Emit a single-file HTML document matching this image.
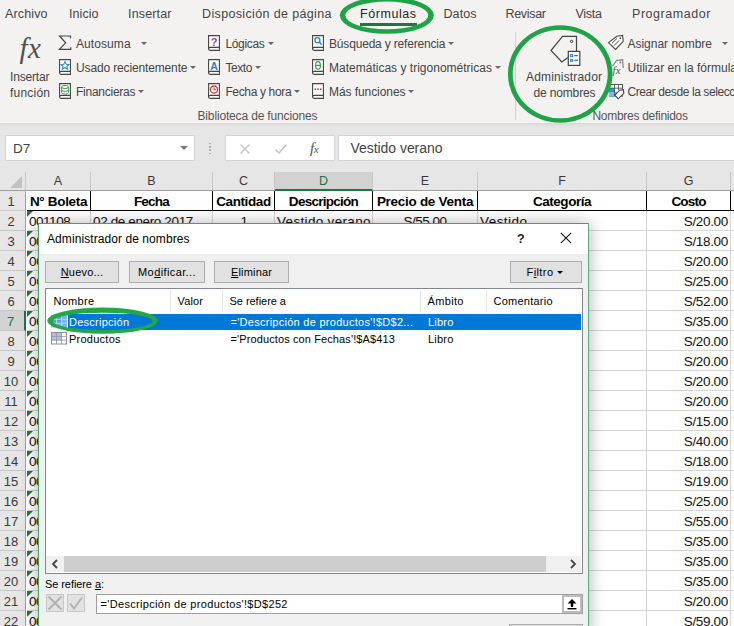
<!DOCTYPE html>
<html lang="es">
<head>
<meta charset="utf-8">
<title>Administrador de nombres</title>
<style>
html,body{margin:0;padding:0;}
body{width:734px;height:626px;overflow:hidden;position:relative;background:#e6e6e6;font-family:"Liberation Sans",sans-serif;color:#444;}
.abs{position:absolute;white-space:nowrap;}
#ribbon{position:absolute;left:0;top:0;width:734px;height:123px;background:#f3f2f1;border-bottom:1px solid #d8d8d8;}
#rshadow{position:absolute;left:0;top:124px;width:734px;height:4px;background:linear-gradient(#dcdcdc,#e6e6e6);}
.tab{position:absolute;top:6px;font-size:12.5px;color:#444;white-space:nowrap;line-height:16px;}
.cmd{position:absolute;font-size:12px;color:#444;white-space:nowrap;line-height:16px;}
.grp{position:absolute;font-size:12px;color:#555;white-space:nowrap;top:108px;line-height:16px;}
.dd{position:absolute;top:6px;width:0;height:0;border-left:3px solid transparent;border-right:3px solid transparent;border-top:3px solid #666;}
.dd2{display:inline-block;width:0;height:0;border-left:3px solid transparent;border-right:3px solid transparent;border-top:3px solid #000;vertical-align:middle;margin-left:4px;}
/* formula bar */
#namebox{position:absolute;left:5px;top:135px;width:188px;height:24px;background:#fff;border:1px solid #d4d4d4;}
#fxbox{position:absolute;left:225px;top:135px;width:108px;height:24px;background:#fff;border:1px solid #d4d4d4;}
#fbox{position:absolute;left:338px;top:135px;width:400px;height:24px;background:#fff;border:1px solid #d4d4d4;}
/* grid */
#grid{position:absolute;left:0;top:172px;width:734px;height:454px;background:#fff;overflow:hidden;font-family:"Liberation Sans",sans-serif;}
.ch{position:absolute;top:0;height:19px;background:#e6e6e6;border-right:1px solid #c6c6c6;border-bottom:1px solid #9f9f9f;font-size:12.5px;color:#3a3a3a;text-align:center;line-height:19px;box-sizing:border-box;}
.ch.sel{background:#d2d2d2;color:#217346;border-bottom:2px solid #217346;}
.rh{position:absolute;left:0;width:26px;height:20px;background:#e6e6e6;border-bottom:1px solid #c6c6c6;border-right:1px solid #9f9f9f;font-size:13px;color:#3a3a3a;text-align:center;line-height:21px;box-sizing:border-box;padding-right:3px;}
.rh.sel{background:#d2d2d2;color:#217346;border-right:2px solid #217346;}
.cell{position:absolute;height:20px;line-height:20px;font-size:13.5px;color:#111;white-space:nowrap;overflow:hidden;box-sizing:border-box;border-right:1px solid #d4d4d4;border-bottom:1px solid #d4d4d4;padding:1px 2px 0 2px;}
.cell.hd{font-weight:bold;text-align:center;border-right:1px solid #000;border-bottom:1px solid #000;color:#000;font-size:13.5px;padding-top:1px;}
.tri{position:absolute;left:0;top:0;width:0;height:0;border-right:6px solid transparent;border-top:6px solid #1e7b3c;}
/* dialog */
#dlg{position:absolute;left:38px;top:223px;width:549px;height:410px;background:#f0f0f0;border:1px solid #5aab7c;border-top-color:#469f69;border-left-color:#469f69;box-shadow:0 1px 16px rgba(0,0,0,.32);font-size:12px;color:#000;}
#dlgin{position:absolute;left:3px;top:1px;width:546px;height:409px;}
#dlgtitle{position:absolute;left:-3px;top:-1px;width:549px;height:30px;background:#fff;}
.btn{position:absolute;height:22px;border:1px solid #adadad;background:#e1e1e1;box-sizing:border-box;text-align:center;line-height:20px;font-size:11px;color:#000;}
#list{position:absolute;left:3px;top:63px;width:538px;height:286px;background:#fff;border:1px solid #828790;box-sizing:border-box;}
.lh{position:absolute;top:1px;height:22px;line-height:22px;border-right:1px solid #e5e5e5;box-sizing:border-box;padding-left:6.5px;font-size:11px;}
.lr{position:absolute;left:1px;width:535px;height:16px;line-height:16px;font-size:11px;}
.lr span{position:absolute;top:0;}
.ti{position:absolute;}
</style>
</head>
<body>
<div id="ribbon">
  <div class="tab" style="left:5px;"><span class="fit" style="letter-spacing:0.135px;--w:42.5px">Archivo</span></div>
  <div class="tab" style="left:69px;"><span class="fit" style="letter-spacing:0.062px;--w:29.5px">Inicio</span></div>
  <div class="tab" style="left:128px;"><span class="fit" style="letter-spacing:0.158px;--w:43.5px">Insertar</span></div>
  <div class="tab" style="left:202px;"><span class="fit" style="letter-spacing:0.359px;--w:129.5px">Disposición de página</span></div>
  <div class="tab" style="left:360px;color:#262626"><span class="fit" style="letter-spacing:0.558px;--w:56px">Fórmulas</span></div>
  <div class="abs" style="left:360px;top:23px;width:57px;height:3px;background:#217346"></div>
  <div class="tab" style="left:443.5px;"><span class="fit" style="letter-spacing:0.086px;--w:33px">Datos</span></div>
  <div class="tab" style="left:505.5px;"><span class="fit" style="letter-spacing:-0.312px;--w:40.5px">Revisar</span></div>
  <div class="tab" style="left:575.5px;"><span class="fit" style="letter-spacing:-0.270px;--w:26.5px">Vista</span></div>
  <div class="tab" style="left:632px;"><span class="fit" style="letter-spacing:0.555px;--w:78.5px">Programador</span></div>
  <div class="abs" style="left:19.5px;top:32px;font-family:'Liberation Serif',serif;font-style:italic;font-size:29px;color:#505050;line-height:32px;letter-spacing:0.5px">fx</div>
  <div class="cmd" style="left:10px;top:69px"><span class="fit" style="letter-spacing:-0.170px;--w:39.5px">Insertar</span></div>
  <div class="cmd" style="left:10px;top:85px"><span class="fit" style="letter-spacing:0.216px;--w:40px">función</span></div>
  <div class="cmd" style="left:76px;top:36px"><span class="fit" style="letter-spacing:0.081px;--w:54.6px">Autosuma</span><i class="dd" style="left:64.5px"></i></div>
  <div class="cmd" style="left:76px;top:60px"><span class="fit" style="letter-spacing:-0.143px;--w:111.5px">Usado recientemente</span><i class="dd" style="left:114.4px"></i></div>
  <div class="cmd" style="left:76px;top:84px"><span class="fit" style="letter-spacing:-0.253px;--w:59.5px">Financieras</span><i class="dd" style="left:61.599999999999994px"></i></div>
  <div class="cmd" style="left:225.4px;top:36px"><span class="fit" style="letter-spacing:-0.329px;--w:39.4px">Lógicas</span><i class="dd" style="left:42.20000000000002px"></i></div>
  <div class="cmd" style="left:225.4px;top:60px"><span class="fit" style="letter-spacing:-0.422px;--w:27px">Texto</span><i class="dd" style="left:29.599999999999994px"></i></div>
  <div class="cmd" style="left:225.4px;top:84px"><span class="fit" style="letter-spacing:-0.350px;--w:66.2px">Fecha y hora</span><i class="dd" style="left:68.6px"></i></div>
  <div class="cmd" style="left:329px;top:36px"><span class="fit" style="letter-spacing:-0.179px;--w:116.5px">Búsqueda y referencia</span><i class="dd" style="left:118.5px"></i></div>
  <div class="cmd" style="left:329px;top:60px"><span class="fit" style="letter-spacing:0.009px;--w:163px">Matemáticas y trigonométricas</span><i class="dd" style="left:166px"></i></div>
  <div class="cmd" style="left:329px;top:84px"><span class="fit" style="letter-spacing:-0.073px;--w:76.5px">Más funciones</span><i class="dd" style="left:79px"></i></div>
  <div class="grp" style="left:197.5px"><span class="fit" style="letter-spacing:-0.156px;--w:120px">Biblioteca de funciones</span></div>
  <div class="abs" style="left:515px;top:32px;width:1px;height:88px;background:#d2d0ce"></div>
  <div class="cmd" style="left:526px;top:69px"><span class="fit" style="letter-spacing:0.164px;--w:76px">Administrador</span></div>
  <div class="cmd" style="left:533.5px;top:85px"><span class="fit" style="letter-spacing:-0.153px;--w:62px">de nombres</span></div>
  <div class="cmd" style="left:627.5px;top:36px"><span class="fit" style="letter-spacing:-0.017px;--w:84.5px">Asignar nombre</span><i class="dd" style="left:94.20000000000005px"></i></div>
  <div class="cmd" style="left:627.5px;top:60px"><span class="fit" style="letter-spacing:0.006px;--w:109.5px">Utilizar en la fórmula</span></div>
  <div class="cmd" style="left:627.5px;top:84px"><span class="fit" style="letter-spacing:-0.416px;--w:122.5px">Crear desde la selección</span></div>
  <div class="grp" style="left:592.4px"><span class="fit" style="letter-spacing:-0.279px;--w:95.6px">Nombres definidos</span></div>
<svg class="abs" style="left:58px;top:35px" width="14" height="16" viewBox="0 0 14 16"><path d="M12.5 3.2V1H1.6L7.6 7.8L1.4 14.4H12.8V12.2" fill="none" stroke="#444" stroke-width="1.2"/></svg>
<svg class="abs" style="left:58px;top:59px" width="14" height="17" viewBox="0 0 14 17"><path d="M1.6 0.6H12.4V15.4H3.2A1.6 1.6 0 0 1 1.6 13.8Z" fill="#fff" stroke="#444" stroke-width="1.1"/><path d="M1.6 13.8A1.6 1.6 0 0 1 3.2 12.4H12.4" fill="none" stroke="#444" stroke-width="1.1"/><path d="M7 2.6L8.2 5.3L11 5.5L8.9 7.4L9.6 10.2L7 8.7L4.4 10.2L5.1 7.4L3 5.5L5.8 5.3Z" fill="#fff" stroke="#2b8ad6" stroke-width="1.1"/></svg>
<svg class="abs" style="left:58px;top:83px" width="14" height="17" viewBox="0 0 14 17"><path d="M1.6 0.6H12.4V15.4H3.2A1.6 1.6 0 0 1 1.6 13.8Z" fill="#fff" stroke="#444" stroke-width="1.1"/><path d="M1.6 13.8A1.6 1.6 0 0 1 3.2 12.4H12.4" fill="none" stroke="#444" stroke-width="1.1"/><ellipse cx="7" cy="4" rx="3.4" ry="1.5" fill="#fff" stroke="#3c9a4f" stroke-width="1"/><path d="M3.6 4V9.6A3.4 1.5 0 0 0 10.4 9.6V4M3.6 6.9A3.4 1.5 0 0 0 10.4 6.9" fill="none" stroke="#3c9a4f" stroke-width="1"/></svg>
<svg class="abs" style="left:207px;top:35px" width="14" height="17" viewBox="0 0 14 17"><path d="M1.6 0.6H12.4V15.4H3.2A1.6 1.6 0 0 1 1.6 13.8Z" fill="#fff" stroke="#444" stroke-width="1.1"/><path d="M1.6 13.8A1.6 1.6 0 0 1 3.2 12.4H12.4" fill="none" stroke="#444" stroke-width="1.1"/><text x="7" y="10.6" font-family="Liberation Sans, sans-serif" font-weight="bold" font-size="11" text-anchor="middle" fill="#9b3fb5">?</text></svg>
<svg class="abs" style="left:207px;top:59px" width="14" height="17" viewBox="0 0 14 17"><path d="M1.6 0.6H12.4V15.4H3.2A1.6 1.6 0 0 1 1.6 13.8Z" fill="#fff" stroke="#444" stroke-width="1.1"/><path d="M1.6 13.8A1.6 1.6 0 0 1 3.2 12.4H12.4" fill="none" stroke="#444" stroke-width="1.1"/><text x="7" y="10.6" font-family="Liberation Sans, sans-serif" font-weight="bold" font-size="10.5" text-anchor="middle" fill="#2b7bd0">A</text></svg>
<svg class="abs" style="left:207px;top:83px" width="14" height="17" viewBox="0 0 14 17"><path d="M1.6 0.6H12.4V15.4H3.2A1.6 1.6 0 0 1 1.6 13.8Z" fill="#fff" stroke="#444" stroke-width="1.1"/><path d="M1.6 13.8A1.6 1.6 0 0 1 3.2 12.4H12.4" fill="none" stroke="#444" stroke-width="1.1"/><circle cx="7" cy="6.6" r="3.6" fill="#fff" stroke="#d83b3b" stroke-width="1.3"/><path d="M7 4.4V6.8H9" fill="none" stroke="#d83b3b" stroke-width="1.1"/></svg>
<svg class="abs" style="left:311px;top:35px" width="14" height="17" viewBox="0 0 14 17"><path d="M1.6 0.6H12.4V15.4H3.2A1.6 1.6 0 0 1 1.6 13.8Z" fill="#fff" stroke="#444" stroke-width="1.1"/><path d="M1.6 13.8A1.6 1.6 0 0 1 3.2 12.4H12.4" fill="none" stroke="#444" stroke-width="1.1"/><circle cx="6.4" cy="5.2" r="2.5" fill="#fff" stroke="#2b7bd0" stroke-width="1.3"/><path d="M8.2 7L10.6 9.6" stroke="#2b7bd0" stroke-width="1.5"/></svg>
<svg class="abs" style="left:311px;top:59px" width="14" height="17" viewBox="0 0 14 17"><path d="M1.6 0.6H12.4V15.4H3.2A1.6 1.6 0 0 1 1.6 13.8Z" fill="#fff" stroke="#444" stroke-width="1.1"/><path d="M1.6 13.8A1.6 1.6 0 0 1 3.2 12.4H12.4" fill="none" stroke="#444" stroke-width="1.1"/><ellipse cx="7" cy="6.4" rx="2.4" ry="3.8" fill="#fff" stroke="#3c9a4f" stroke-width="1.2"/><path d="M4.6 6.4H9.4" stroke="#3c9a4f" stroke-width="1.2"/></svg>
<svg class="abs" style="left:311px;top:83px" width="14" height="17" viewBox="0 0 14 17"><path d="M1.6 0.6H12.4V15.4H3.2A1.6 1.6 0 0 1 1.6 13.8Z" fill="#fff" stroke="#444" stroke-width="1.1"/><path d="M1.6 13.8A1.6 1.6 0 0 1 3.2 12.4H12.4" fill="none" stroke="#444" stroke-width="1.1"/><rect x="3.6" y="5.4" width="1.6" height="1.6" fill="#d83b3b"/><rect x="6.2" y="5.4" width="1.6" height="1.6" fill="#d83b3b"/><rect x="8.8" y="5.4" width="1.6" height="1.6" fill="#d83b3b"/></svg>
<svg class="abs" style="left:548px;top:33px" width="36" height="36" viewBox="548 33 36 36"><path d="M568 57.5L561.8 62L551 50.5L562.5 36.4H576.5V51" fill="none" stroke="#444" stroke-width="1.2"/><circle cx="571.6" cy="41.4" r="1.2" fill="none" stroke="#444" stroke-width="1"/><rect x="568.3" y="51.4" width="11.5" height="14" fill="#fff" stroke="#444" stroke-width="1.2"/><rect x="570.6" y="54.6" width="2" height="2" fill="none" stroke="#2b7bd0" stroke-width="1"/><rect x="570.6" y="59.4" width="2" height="2" fill="none" stroke="#2b7bd0" stroke-width="1"/><path d="M574.2 55.6H578M574.2 60.4H578" stroke="#2b7bd0" stroke-width="1.1"/></svg>
<svg class="abs" style="left:606px;top:33px" width="20" height="20" viewBox="606 33 20 20"><path d="M608.5 42.6L616.8 36.2L622.6 35.4L623.2 41.4L615.6 49.4Z" fill="#fff" stroke="#444" stroke-width="1.1"/><circle cx="620.3" cy="38.2" r="0.9" fill="#444"/><path d="M612 43.2L617 38.4M614 45.6L619 40.6" stroke="#444" stroke-width="1"/></svg>
<svg class="abs" style="left:606px;top:57px" width="20" height="20" viewBox="606 57 20 20"><path d="M612.6 66L616.6 60.4L622.6 59.6L623.2 68" fill="none" stroke="#777" stroke-width="1.1"/><circle cx="620.3" cy="62.4" r="0.9" fill="#666"/><text x="612.6" y="74" font-family="Liberation Serif, serif" font-style="italic" font-size="11" fill="#555">fx</text></svg>
<svg class="abs" style="left:606px;top:81px" width="20" height="20" viewBox="606 81 20 20"><rect x="609.5" y="84.5" width="13" height="11.6" fill="#fff" stroke="#555" stroke-width="1"/><rect x="609" y="88" width="6" height="8.6" fill="#3a8ee6"/><rect x="609" y="92" width="9" height="4.6" fill="#7fb8f0"/><path d="M609.5 88.2H622.5M614.5 84.5V96M618.5 84.5V90" stroke="#555" stroke-width="0.9" fill="none"/><path d="M614.8 95.2L619.6 90.2L623.4 89.6L623.8 93.4L618.2 98.8Z" fill="#fff" stroke="#444" stroke-width="1.1"/></svg>
</div>
<div id="rshadow"></div>

<div id="namebox"><div class="abs" style="left:7px;top:4px;font-size:13.5px;color:#444;line-height:17px">D7</div>
  <div class="abs" style="left:174px;top:10px;width:0;height:0;border-left:4px solid transparent;border-right:4px solid transparent;border-top:4px solid #777"></div></div>
<div class="abs" style="left:209px;top:143px;width:2px;height:11px;background:repeating-linear-gradient(#b0b0b0 0 1.5px,transparent 1.5px 3.2px)"></div>
<div id="fxbox"><svg class="abs" style="left:13px;top:7px" width="12" height="12" viewBox="0 0 12 12"><path d="M1.5 1.5L10.5 10.5M10.5 1.5L1.5 10.5" stroke="#c2c2c2" stroke-width="1.3" fill="none"/></svg><svg class="abs" style="left:48px;top:7px" width="14" height="12" viewBox="0 0 14 12"><path d="M1.5 6.5L5 10L12.5 1.5" stroke="#c2c2c2" stroke-width="1.4" fill="none"/></svg><div class="abs" style="left:84px;top:3px;font-family:'Liberation Serif',serif;font-style:italic;font-size:15px;line-height:18px;color:#555;letter-spacing:-0.5px">f<span style="font-size:11px">x</span></div></div>
<div id="fbox"><div class="abs" style="left:11.5px;top:4px;font-size:14px;color:#444;line-height:16px"><span class="fit" style="letter-spacing:-0.048px;--w:92px">Vestido verano</span></div></div>

<div id="grid">
<div class="ch" style="left:0;width:26px"><div class="abs" style="left:10px;top:4px;width:0;height:0;border-left:12px solid transparent;border-bottom:12px solid #c2c2c2"></div></div>
<div class="ch" style="left:26px;width:65px">A</div>
<div class="ch" style="left:91px;width:122px">B</div>
<div class="ch" style="left:213px;width:62px">C</div>
<div class="ch sel" style="left:275px;width:98px">D</div>
<div class="ch" style="left:373px;width:105px">E</div>
<div class="ch" style="left:478px;width:169px">F</div>
<div class="ch" style="left:647px;width:84px">G</div>
<div class="ch" style="left:731px;width:70px">H</div>
<div class="rh" style="top:19px">1</div>
<div class="cell hd" style="left:27px;top:19px;width:64px;"><span class="fit" style="letter-spacing:-0.334px;--w:57.5px">N° Boleta</span></div>
<div class="cell hd" style="left:91px;top:19px;width:122px;"><span class="fit" style="letter-spacing:-0.758px;--w:36px">Fecha</span></div>
<div class="cell hd" style="left:213px;top:19px;width:62px;"><span class="fit" style="letter-spacing:-0.395px;--w:55px">Cantidad</span></div>
<div class="cell hd" style="left:275px;top:19px;width:98px;"><span class="fit" style="letter-spacing:-0.728px;--w:70px">Descripción</span></div>
<div class="cell hd" style="left:373px;top:19px;width:105px;"><span class="fit" style="letter-spacing:-0.289px;--w:96.5px">Precio de Venta</span></div>
<div class="cell hd" style="left:478px;top:19px;width:169px;"><span class="fit" style="letter-spacing:-0.473px;--w:58.5px">Categoría</span></div>
<div class="cell hd" style="left:647px;top:19px;width:84px;"><span class="fit" style="letter-spacing:-0.812px;--w:35px">Costo</span></div>
<div class="cell hd" style="left:731px;top:19px;width:70px;"></div>
<div class="rh" style="top:39px">2</div>
<div class="cell" style="left:27px;top:39px;width:64px;text-align:left"><i class="tri"></i><span class="fit" style="letter-spacing:-0.469px;--w:41.7px">001108</span></div>
<div class="cell" style="left:91px;top:39px;width:122px;text-align:left"><span class="fit" style="letter-spacing:-0.371px;--w:100.3px">02 de enero 2017</span></div>
<div class="cell" style="left:213px;top:39px;width:62px;text-align:center"><span class="fit" style="letter-spacing:-1.516px;--w:6px">1</span></div>
<div class="cell" style="left:275px;top:39px;width:98px;text-align:left"><span class="fit" style="letter-spacing:0.322px;--w:93.5px">Vestido verano</span></div>
<div class="cell" style="left:373px;top:39px;width:105px;text-align:center"><span class="fit" style="letter-spacing:-0.508px;--w:43.5px">S/55.00</span></div>
<div class="cell" style="left:478px;top:39px;width:169px;text-align:left"><span class="fit" style="letter-spacing:0.451px;--w:47px">Vestido</span></div>
<div class="cell" style="left:647px;top:39px;width:84px;text-align:right"><span class="fit" style="letter-spacing:-0.324px;--w:44.6px">S/20.00</span></div>
<div class="cell" style="left:731px;top:39px;width:70px;color:#8a7a50;padding-left:2.5px"><span>V</span></div>
<div class="rh" style="top:59px">3</div>
<div class="cell" style="left:27px;top:59px;width:64px;"><i class="tri"></i><span class="fit" style="letter-spacing:-0.469px;--w:41.7px">001109</span></div>
<div class="cell" style="left:91px;top:59px;width:122px;"></div>
<div class="cell" style="left:213px;top:59px;width:62px;"></div>
<div class="cell" style="left:275px;top:59px;width:98px;"></div>
<div class="cell" style="left:373px;top:59px;width:105px;"></div>
<div class="cell" style="left:478px;top:59px;width:169px;"></div>
<div class="cell" style="left:647px;top:59px;width:84px;text-align:right"><span class="fit" style="letter-spacing:-0.324px;--w:44.6px">S/18.00</span></div>
<div class="cell" style="left:731px;top:59px;width:70px;color:#8a7a50;padding-left:2.5px"><span>V</span></div>
<div class="rh" style="top:79px">4</div>
<div class="cell" style="left:27px;top:79px;width:64px;"><i class="tri"></i><span class="fit" style="letter-spacing:-0.269px;--w:41.7px">001110</span></div>
<div class="cell" style="left:91px;top:79px;width:122px;"></div>
<div class="cell" style="left:213px;top:79px;width:62px;"></div>
<div class="cell" style="left:275px;top:79px;width:98px;"></div>
<div class="cell" style="left:373px;top:79px;width:105px;"></div>
<div class="cell" style="left:478px;top:79px;width:169px;"></div>
<div class="cell" style="left:647px;top:79px;width:84px;text-align:right"><span class="fit" style="letter-spacing:-0.324px;--w:44.6px">S/20.00</span></div>
<div class="cell" style="left:731px;top:79px;width:70px;color:#8a7a50;padding-left:2.5px"><span>V</span></div>
<div class="rh" style="top:99px">5</div>
<div class="cell" style="left:27px;top:99px;width:64px;"><i class="tri"></i><span class="fit" style="letter-spacing:-0.069px;--w:41.7px">001111</span></div>
<div class="cell" style="left:91px;top:99px;width:122px;"></div>
<div class="cell" style="left:213px;top:99px;width:62px;"></div>
<div class="cell" style="left:275px;top:99px;width:98px;"></div>
<div class="cell" style="left:373px;top:99px;width:105px;"></div>
<div class="cell" style="left:478px;top:99px;width:169px;"></div>
<div class="cell" style="left:647px;top:99px;width:84px;text-align:right"><span class="fit" style="letter-spacing:-0.324px;--w:44.6px">S/25.00</span></div>
<div class="cell" style="left:731px;top:99px;width:70px;color:#8a7a50;padding-left:2.5px"><span>V</span></div>
<div class="rh" style="top:119px">6</div>
<div class="cell" style="left:27px;top:119px;width:64px;"><i class="tri"></i><span class="fit" style="letter-spacing:-0.269px;--w:41.7px">001112</span></div>
<div class="cell" style="left:91px;top:119px;width:122px;"></div>
<div class="cell" style="left:213px;top:119px;width:62px;"></div>
<div class="cell" style="left:275px;top:119px;width:98px;"></div>
<div class="cell" style="left:373px;top:119px;width:105px;"></div>
<div class="cell" style="left:478px;top:119px;width:169px;"></div>
<div class="cell" style="left:647px;top:119px;width:84px;text-align:right"><span class="fit" style="letter-spacing:-0.324px;--w:44.6px">S/52.00</span></div>
<div class="cell" style="left:731px;top:119px;width:70px;color:#8a7a50;padding-left:2.5px"><span>V</span></div>
<div class="rh sel" style="top:139px">7</div>
<div class="cell" style="left:27px;top:139px;width:64px;"><i class="tri"></i><span class="fit" style="letter-spacing:-0.269px;--w:41.7px">001113</span></div>
<div class="cell" style="left:91px;top:139px;width:122px;"></div>
<div class="cell" style="left:213px;top:139px;width:62px;"></div>
<div class="cell" style="left:275px;top:139px;width:98px;"></div>
<div class="cell" style="left:373px;top:139px;width:105px;"></div>
<div class="cell" style="left:478px;top:139px;width:169px;"></div>
<div class="cell" style="left:647px;top:139px;width:84px;text-align:right"><span class="fit" style="letter-spacing:-0.324px;--w:44.6px">S/35.00</span></div>
<div class="cell" style="left:731px;top:139px;width:70px;color:#8a7a50;padding-left:2.5px"><span>V</span></div>
<div class="rh" style="top:159px">8</div>
<div class="cell" style="left:27px;top:159px;width:64px;"><i class="tri"></i><span class="fit" style="letter-spacing:-0.269px;--w:41.7px">001114</span></div>
<div class="cell" style="left:91px;top:159px;width:122px;"></div>
<div class="cell" style="left:213px;top:159px;width:62px;"></div>
<div class="cell" style="left:275px;top:159px;width:98px;"></div>
<div class="cell" style="left:373px;top:159px;width:105px;"></div>
<div class="cell" style="left:478px;top:159px;width:169px;"></div>
<div class="cell" style="left:647px;top:159px;width:84px;text-align:right"><span class="fit" style="letter-spacing:-0.324px;--w:44.6px">S/20.00</span></div>
<div class="cell" style="left:731px;top:159px;width:70px;color:#8a7a50;padding-left:2.5px"><span>V</span></div>
<div class="rh" style="top:179px">9</div>
<div class="cell" style="left:27px;top:179px;width:64px;"><i class="tri"></i><span class="fit" style="letter-spacing:-0.269px;--w:41.7px">001115</span></div>
<div class="cell" style="left:91px;top:179px;width:122px;"></div>
<div class="cell" style="left:213px;top:179px;width:62px;"></div>
<div class="cell" style="left:275px;top:179px;width:98px;"></div>
<div class="cell" style="left:373px;top:179px;width:105px;"></div>
<div class="cell" style="left:478px;top:179px;width:169px;"></div>
<div class="cell" style="left:647px;top:179px;width:84px;text-align:right"><span class="fit" style="letter-spacing:-0.324px;--w:44.6px">S/20.00</span></div>
<div class="cell" style="left:731px;top:179px;width:70px;color:#8a7a50;padding-left:2.5px"><span>V</span></div>
<div class="rh" style="top:199px">10</div>
<div class="cell" style="left:27px;top:199px;width:64px;"><i class="tri"></i><span class="fit" style="letter-spacing:-0.269px;--w:41.7px">001116</span></div>
<div class="cell" style="left:91px;top:199px;width:122px;"></div>
<div class="cell" style="left:213px;top:199px;width:62px;"></div>
<div class="cell" style="left:275px;top:199px;width:98px;"></div>
<div class="cell" style="left:373px;top:199px;width:105px;"></div>
<div class="cell" style="left:478px;top:199px;width:169px;"></div>
<div class="cell" style="left:647px;top:199px;width:84px;text-align:right"><span class="fit" style="letter-spacing:-0.324px;--w:44.6px">S/20.00</span></div>
<div class="cell" style="left:731px;top:199px;width:70px;color:#8a7a50;padding-left:2.5px"><span>V</span></div>
<div class="rh" style="top:219px">11</div>
<div class="cell" style="left:27px;top:219px;width:64px;"><i class="tri"></i><span class="fit" style="letter-spacing:-0.269px;--w:41.7px">001117</span></div>
<div class="cell" style="left:91px;top:219px;width:122px;"></div>
<div class="cell" style="left:213px;top:219px;width:62px;"></div>
<div class="cell" style="left:275px;top:219px;width:98px;"></div>
<div class="cell" style="left:373px;top:219px;width:105px;"></div>
<div class="cell" style="left:478px;top:219px;width:169px;"></div>
<div class="cell" style="left:647px;top:219px;width:84px;text-align:right"><span class="fit" style="letter-spacing:-0.324px;--w:44.6px">S/20.00</span></div>
<div class="cell" style="left:731px;top:219px;width:70px;color:#8a7a50;padding-left:2.5px"><span>V</span></div>
<div class="rh" style="top:239px">12</div>
<div class="cell" style="left:27px;top:239px;width:64px;"><i class="tri"></i><span class="fit" style="letter-spacing:-0.269px;--w:41.7px">001118</span></div>
<div class="cell" style="left:91px;top:239px;width:122px;"></div>
<div class="cell" style="left:213px;top:239px;width:62px;"></div>
<div class="cell" style="left:275px;top:239px;width:98px;"></div>
<div class="cell" style="left:373px;top:239px;width:105px;"></div>
<div class="cell" style="left:478px;top:239px;width:169px;"></div>
<div class="cell" style="left:647px;top:239px;width:84px;text-align:right"><span class="fit" style="letter-spacing:-0.324px;--w:44.6px">S/15.00</span></div>
<div class="cell" style="left:731px;top:239px;width:70px;color:#8a7a50;padding-left:2.5px"><span>V</span></div>
<div class="rh" style="top:259px">13</div>
<div class="cell" style="left:27px;top:259px;width:64px;"><i class="tri"></i><span class="fit" style="letter-spacing:-0.269px;--w:41.7px">001119</span></div>
<div class="cell" style="left:91px;top:259px;width:122px;"></div>
<div class="cell" style="left:213px;top:259px;width:62px;"></div>
<div class="cell" style="left:275px;top:259px;width:98px;"></div>
<div class="cell" style="left:373px;top:259px;width:105px;"></div>
<div class="cell" style="left:478px;top:259px;width:169px;"></div>
<div class="cell" style="left:647px;top:259px;width:84px;text-align:right"><span class="fit" style="letter-spacing:-0.324px;--w:44.6px">S/40.00</span></div>
<div class="cell" style="left:731px;top:259px;width:70px;color:#8a7a50;padding-left:2.5px"><span>V</span></div>
<div class="rh" style="top:279px">14</div>
<div class="cell" style="left:27px;top:279px;width:64px;"><i class="tri"></i><span class="fit" style="letter-spacing:-0.469px;--w:41.7px">001120</span></div>
<div class="cell" style="left:91px;top:279px;width:122px;"></div>
<div class="cell" style="left:213px;top:279px;width:62px;"></div>
<div class="cell" style="left:275px;top:279px;width:98px;"></div>
<div class="cell" style="left:373px;top:279px;width:105px;"></div>
<div class="cell" style="left:478px;top:279px;width:169px;"></div>
<div class="cell" style="left:647px;top:279px;width:84px;text-align:right"><span class="fit" style="letter-spacing:-0.324px;--w:44.6px">S/18.00</span></div>
<div class="cell" style="left:731px;top:279px;width:70px;color:#8a7a50;padding-left:2.5px"><span>V</span></div>
<div class="rh" style="top:299px">15</div>
<div class="cell" style="left:27px;top:299px;width:64px;"><i class="tri"></i><span class="fit" style="letter-spacing:-0.469px;--w:41.7px">001121</span></div>
<div class="cell" style="left:91px;top:299px;width:122px;"></div>
<div class="cell" style="left:213px;top:299px;width:62px;"></div>
<div class="cell" style="left:275px;top:299px;width:98px;"></div>
<div class="cell" style="left:373px;top:299px;width:105px;"></div>
<div class="cell" style="left:478px;top:299px;width:169px;"></div>
<div class="cell" style="left:647px;top:299px;width:84px;text-align:right"><span class="fit" style="letter-spacing:-0.324px;--w:44.6px">S/19.00</span></div>
<div class="cell" style="left:731px;top:299px;width:70px;color:#8a7a50;padding-left:2.5px"><span>V</span></div>
<div class="rh" style="top:319px">16</div>
<div class="cell" style="left:27px;top:319px;width:64px;"><i class="tri"></i><span class="fit" style="letter-spacing:-0.469px;--w:41.7px">001122</span></div>
<div class="cell" style="left:91px;top:319px;width:122px;"></div>
<div class="cell" style="left:213px;top:319px;width:62px;"></div>
<div class="cell" style="left:275px;top:319px;width:98px;"></div>
<div class="cell" style="left:373px;top:319px;width:105px;"></div>
<div class="cell" style="left:478px;top:319px;width:169px;"></div>
<div class="cell" style="left:647px;top:319px;width:84px;text-align:right"><span class="fit" style="letter-spacing:-0.324px;--w:44.6px">S/25.00</span></div>
<div class="cell" style="left:731px;top:319px;width:70px;color:#8a7a50;padding-left:2.5px"><span>V</span></div>
<div class="rh" style="top:339px">17</div>
<div class="cell" style="left:27px;top:339px;width:64px;"><i class="tri"></i><span class="fit" style="letter-spacing:-0.469px;--w:41.7px">001123</span></div>
<div class="cell" style="left:91px;top:339px;width:122px;"></div>
<div class="cell" style="left:213px;top:339px;width:62px;"></div>
<div class="cell" style="left:275px;top:339px;width:98px;"></div>
<div class="cell" style="left:373px;top:339px;width:105px;"></div>
<div class="cell" style="left:478px;top:339px;width:169px;"></div>
<div class="cell" style="left:647px;top:339px;width:84px;text-align:right"><span class="fit" style="letter-spacing:-0.324px;--w:44.6px">S/55.00</span></div>
<div class="cell" style="left:731px;top:339px;width:70px;color:#8a7a50;padding-left:2.5px"><span>V</span></div>
<div class="rh" style="top:359px">18</div>
<div class="cell" style="left:27px;top:359px;width:64px;"><i class="tri"></i><span class="fit" style="letter-spacing:-0.469px;--w:41.7px">001124</span></div>
<div class="cell" style="left:91px;top:359px;width:122px;"></div>
<div class="cell" style="left:213px;top:359px;width:62px;"></div>
<div class="cell" style="left:275px;top:359px;width:98px;"></div>
<div class="cell" style="left:373px;top:359px;width:105px;"></div>
<div class="cell" style="left:478px;top:359px;width:169px;"></div>
<div class="cell" style="left:647px;top:359px;width:84px;text-align:right"><span class="fit" style="letter-spacing:-0.324px;--w:44.6px">S/35.00</span></div>
<div class="cell" style="left:731px;top:359px;width:70px;color:#8a7a50;padding-left:2.5px"><span>V</span></div>
<div class="rh" style="top:379px">19</div>
<div class="cell" style="left:27px;top:379px;width:64px;"><i class="tri"></i><span class="fit" style="letter-spacing:-0.469px;--w:41.7px">001125</span></div>
<div class="cell" style="left:91px;top:379px;width:122px;"></div>
<div class="cell" style="left:213px;top:379px;width:62px;"></div>
<div class="cell" style="left:275px;top:379px;width:98px;"></div>
<div class="cell" style="left:373px;top:379px;width:105px;"></div>
<div class="cell" style="left:478px;top:379px;width:169px;"></div>
<div class="cell" style="left:647px;top:379px;width:84px;text-align:right"><span class="fit" style="letter-spacing:-0.324px;--w:44.6px">S/35.00</span></div>
<div class="cell" style="left:731px;top:379px;width:70px;color:#8a7a50;padding-left:2.5px"><span>V</span></div>
<div class="rh" style="top:399px">20</div>
<div class="cell" style="left:27px;top:399px;width:64px;"><i class="tri"></i><span class="fit" style="letter-spacing:-0.469px;--w:41.7px">001126</span></div>
<div class="cell" style="left:91px;top:399px;width:122px;"></div>
<div class="cell" style="left:213px;top:399px;width:62px;"></div>
<div class="cell" style="left:275px;top:399px;width:98px;"></div>
<div class="cell" style="left:373px;top:399px;width:105px;"></div>
<div class="cell" style="left:478px;top:399px;width:169px;"></div>
<div class="cell" style="left:647px;top:399px;width:84px;text-align:right"><span class="fit" style="letter-spacing:-0.324px;--w:44.6px">S/35.00</span></div>
<div class="cell" style="left:731px;top:399px;width:70px;color:#8a7a50;padding-left:2.5px"><span>V</span></div>
<div class="rh" style="top:419px">21</div>
<div class="cell" style="left:27px;top:419px;width:64px;"><i class="tri"></i><span class="fit" style="letter-spacing:-0.469px;--w:41.7px">001127</span></div>
<div class="cell" style="left:91px;top:419px;width:122px;"></div>
<div class="cell" style="left:213px;top:419px;width:62px;"></div>
<div class="cell" style="left:275px;top:419px;width:98px;"></div>
<div class="cell" style="left:373px;top:419px;width:105px;"></div>
<div class="cell" style="left:478px;top:419px;width:169px;"></div>
<div class="cell" style="left:647px;top:419px;width:84px;text-align:right"><span class="fit" style="letter-spacing:-0.324px;--w:44.6px">S/20.00</span></div>
<div class="cell" style="left:731px;top:419px;width:70px;color:#8a7a50;padding-left:2.5px"><span>V</span></div>
<div class="rh" style="top:439px">22</div>
<div class="cell" style="left:27px;top:439px;width:64px;"><i class="tri"></i><span class="fit" style="letter-spacing:-0.469px;--w:41.7px">001128</span></div>
<div class="cell" style="left:91px;top:439px;width:122px;"></div>
<div class="cell" style="left:213px;top:439px;width:62px;"></div>
<div class="cell" style="left:275px;top:439px;width:98px;"></div>
<div class="cell" style="left:373px;top:439px;width:105px;"></div>
<div class="cell" style="left:478px;top:439px;width:169px;"></div>
<div class="cell" style="left:647px;top:439px;width:84px;text-align:right"><span class="fit" style="letter-spacing:-0.324px;--w:44.6px">S/59.00</span></div>
<div class="cell" style="left:731px;top:439px;width:70px;color:#8a7a50;padding-left:2.5px"><span>V</span></div>
</div>

<div id="dlg"><div id="dlgin">
  <div id="dlgtitle"><div class="abs" style="left:8px;top:7px;font-size:12px;line-height:16px;color:#000"><span class="fit" style="letter-spacing:0.077px;--w:142.5px">Administrador de nombres</span></div>
  <div class="abs" style="left:478px;top:7px;font-size:12.5px;font-weight:bold;line-height:16px;color:#222">?</div><svg class="abs" style="left:521px;top:8px" width="12" height="12" viewBox="0 0 12 12"><path d="M0.8 0.8L11.2 11.2M11.2 0.8L0.8 11.2" stroke="#111" stroke-width="1.1" fill="none"/></svg></div>
  <div class="btn" style="left:3px;top:36px;width:74px"><span class="fit" style="letter-spacing:0.217px;--w:42.5px"><u>N</u>uevo...</span></div>
  <div class="btn" style="left:87px;top:36px;width:76px"><span class="fit" style="letter-spacing:0.391px;--w:57.5px">Mo<u>d</u>ificar...</span></div>
  <div class="btn" style="left:172px;top:36px;width:75px"><span class="fit" style="letter-spacing:0.179px;--w:41px"><u>E</u>liminar</span></div>
  <div class="btn" style="left:468px;top:36px;width:72px;text-align:left;padding-left:15.5px"><span class="fit" style="letter-spacing:0.406px;--w:26.5px">F<u>i</u>ltro</span><span class="dd2" style="position:absolute;left:46px;top:9px;margin:0"></span></div>
  <div id="list">
    <div class="lh" style="left:1px;width:124px"><span class="fit" style="letter-spacing:0.275px;--w:40.5px">Nombre</span></div>
    <div class="lh" style="left:125px;width:52px"><span class="fit" style="letter-spacing:0.156px;--w:25.5px">Valor</span></div>
    <div class="lh" style="left:177px;width:198px"><span class="fit" style="letter-spacing:-0.034px;--w:56.5px">Se refiere a</span></div>
    <div class="lh" style="left:375px;width:66px"><span class="fit" style="letter-spacing:0.350px;--w:36px">Ámbito</span></div>
    <div class="lh" style="left:441px;width:94px;border-right:none"><span class="fit" style="letter-spacing:0.238px;--w:59px">Comentario</span></div>
    <div class="lr" style="top:25px;color:#fff;left:3px;width:532px;"><div class="abs" style="left:18.5px;top:0;width:513.5px;height:16px;background:#0078d7"></div><svg class="ti" width="16" height="13" viewBox="0 0 16 13" style="left:2px;top:1px"><rect x="0.5" y="0.5" width="15" height="11.5" fill="#7db3ea" stroke="#8fbdea"/><rect x="1" y="1" width="9.5" height="7.2" fill="#5a9fe3"/><path d="M0.5 4.4H15.5M0.5 8.2H15.5M5.5 0.5V12M10.5 0.5V12" stroke="#b9d6f3" stroke-width="0.9" fill="none"/></svg><span class="fit" style="left:20px;letter-spacing:0.253px;--w:60px">Descripción</span><span class="fit" style="left:181.5px;letter-spacing:0.271px;--w:182.5px">='Descripción de productos'!$D$2...</span><span class="fit" style="left:379px;letter-spacing:0.208px;--w:25.3px">Libro</span></div>
    <div class="lr" style="top:42px;left:3px;width:532px;"><svg class="ti" width="16" height="13" viewBox="0 0 16 13" style="left:2px;top:0.5px"><rect x="0.5" y="0.5" width="15" height="11.5" fill="#fff" stroke="#8e8e8e"/><rect x="1" y="1" width="9.5" height="7.2" fill="#a3c6ea"/><path d="M0.5 4.4H15.5M0.5 8.2H15.5M5.5 0.5V12M10.5 0.5V12" stroke="#9a9a9a" stroke-width="0.9" fill="none"/></svg><span class="fit" style="left:20px;letter-spacing:0.246px;--w:51.5px">Productos</span><span class="fit" style="left:181.5px;letter-spacing:0.112px;--w:164.3px">='Productos con Fechas'!$A$413</span><span class="fit" style="left:379px;letter-spacing:0.208px;--w:25.3px">Libro</span></div>
    <div class="abs" style="left:0px;top:267px;width:535px;height:16px;background:#f0f0f0"></div>
    <div class="abs" style="left:18px;top:267px;width:482px;height:16px;background:#cdcdcd"></div>
    <svg class="abs" style="left:5px;top:270px" width="8" height="10" viewBox="0 0 8 10"><path d="M6 1L2 5L6 9" fill="none" stroke="#444" stroke-width="1.8"/></svg>
    <svg class="abs" style="left:523px;top:270px" width="8" height="10" viewBox="0 0 8 10"><path d="M2 1L6 5L2 9" fill="none" stroke="#444" stroke-width="1.8"/></svg>
  </div>
  <div class="abs" style="left:3px;top:352px;font-size:11px;line-height:15px;color:#000"><span class="fit" style="letter-spacing:-0.078px;--w:59px">Se refiere <u>a</u>:</span></div>
  <div class="abs" style="left:4px;top:369px;width:16px;height:16px;border:1px solid #c6c6c6;background:#e2e2e2"><svg style="display:block" width="16" height="16" viewBox="0 0 16 16"><path d="M1.5 1.5L14.5 14.5M14.5 1.5L1.5 14.5" stroke="#b0b0b0" stroke-width="1.8" fill="none"/></svg></div>
  <div class="abs" style="left:25px;top:369px;width:16px;height:16px;border:1px solid #c6c6c6;background:#e2e2e2"><svg style="display:block" width="16" height="16" viewBox="0 0 16 16"><path d="M2 8.5L6 13.5L14 2.5" stroke="#b0b0b0" stroke-width="1.8" fill="none"/></svg></div>
  <div class="abs" style="left:54px;top:369px;width:485px;height:18px;border:1px solid #a0a0a0;background:#fff"><div class="abs" style="left:3.5px;top:1px;font-size:11px;line-height:16px;color:#000"><span class="fit" style="letter-spacing:0.323px;--w:187px">='Descripción de productos'!$D$252</span></div>
    <div class="abs" style="right:0;top:0;width:16px;height:14px;border:2px solid #bcbcbc;background:#fff"><svg width="16" height="14" viewBox="0 0 16 14"><path d="M8 2L3.5 6.5H6.8V10H9.2V6.5H12.5Z" fill="#000"/><rect x="3.5" y="11" width="9" height="1.4" fill="#000"/></svg></div>
  </div>
  <div class="btn" style="left:467px;top:399px;width:74px">Cerrar</div>
</div></div>
<svg class="abs" style="left:0;top:0;z-index:50;pointer-events:none" width="734" height="626" viewBox="0 0 734 626"><path fill-rule="evenodd" fill="#1fa347" d="M339.8 15.3a47.0 18.5 0 1 0 94.0 0a47.0 18.5 0 1 0 -94.0 0ZM345.4 15.4a41.4 13.8 0 1 0 82.8 0a41.4 13.8 0 1 0 -82.8 0Z"/><path fill-rule="evenodd" fill="#1fa347" d="M507.9 74.0a52.3 48.8 0 1 0 104.6 0a52.3 48.8 0 1 0 -104.6 0ZM512.7 74.0a47.5 44.3 0 1 0 95.0 0a47.5 44.3 0 1 0 -95.0 0Z"/><path fill-rule="evenodd" fill="#24a846" d="M47.3 320.7a55.2 13.1 0 1 0 110.4 0a55.2 13.1 0 1 0 -110.4 0ZM53.1 321.3a49.8 8.6 0 1 0 99.6 0a49.8 8.6 0 1 0 -99.6 0Z"/></svg>
</body>
</html>
